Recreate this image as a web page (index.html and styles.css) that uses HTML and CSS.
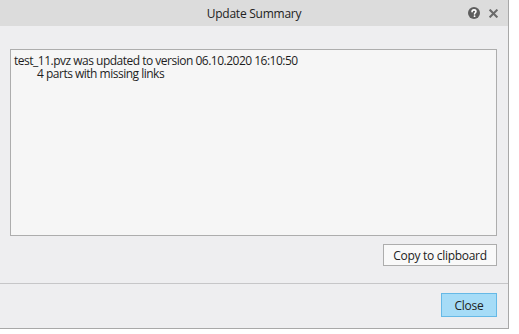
FILE: index.html
```html
<!DOCTYPE html>
<html>
<head>
<meta charset="utf-8">
<link rel="stylesheet" href="styles.css">
</head>
<body>
<div class="dialog">
  <div class="titlebar">
    <span class="title">Update Summary</span>
    <div class="tools">
      <svg class="help" width="12" height="12" viewBox="0 0 13 13">
        <circle cx="6.5" cy="6.5" r="6.5" fill="#5e5e5e"/>
        <path d="M4.4 5.1 C4.4 3.8 5.3 3.1 6.5 3.1 C7.8 3.1 8.6 3.8 8.6 4.9 C8.6 6.2 7.1 6.3 7.1 7.6" fill="none" stroke="#fff" stroke-width="1.7" stroke-linecap="round"/>
        <circle cx="7.1" cy="9.9" r="1" fill="#fff"/>
      </svg>
      <svg class="close-x" width="9" height="9" viewBox="0 0 9 9">
        <path d="M1.3 1.3 L7.7 7.7 M7.7 1.3 L1.3 7.7" stroke="#6a6a6a" stroke-width="2" stroke-linecap="square"/>
      </svg>
    </div>
  </div>
  <div class="body">
    <div class="textbox"><div class="log">test_11.pvz was updated to version 06.10.2020 16:10:50
	4 parts with missing links</div></div>
    <div class="copy-row">
      <button class="btn">Copy to clipboard</button>
    </div>
  </div>
  <div class="footer">
    <button class="btn primary">Close</button>
  </div>
</div>
</body>
</html>
```
FILE: styles.css
```css
html, body {
  margin: 0;
  padding: 0;
  background: #ffffff;
}
body {
  font-family: "Open Sans", "Noto Sans", "Liberation Sans", sans-serif;
  font-size: 12px;
  color: #1e1e1e;
}
.dialog {
  width: 508px;
  height: 328px;
  background: #eeeef0;
  border-right: 1px solid #a8a8a8;
  border-bottom: 1px solid #a8a8a8;
  display: flex;
  flex-direction: column;
}
.titlebar {
  height: 26px;
  background: #dcdcdc;
  display: flex;
  align-items: center;
  justify-content: center;
  position: relative;
  flex: none;
}
.title {
  font-size: 12px;
  letter-spacing: -0.25px;
  color: #222;
}
.tools {
  position: absolute;
  right: 10px;
  top: 7px;
  display: flex;
  align-items: center;
  gap: 9px;
}
.help { display: block; }
.close-x { display: block; }
.body {
  padding: 23px 11px 0 10px;
  flex: none;
}
.textbox {
  height: 185px;
  border: 1px solid #adadad;
  background: #f6f6f6;
  padding: 0 3px;
}
.log {
  margin-top: 4px;
  line-height: 13px;
  letter-spacing: -0.5px;
  white-space: pre;
  tab-size: 23px;
  -moz-tab-size: 23px;
}
.copy-row {
  display: flex;
  justify-content: flex-end;
  margin-top: 8px;
}
.btn {
  font-family: inherit;
  font-size: 12px;
  letter-spacing: -0.3px;
  color: #222;
  background: #f9f9f9;
  border: 1px solid #adadad;
  height: 22px;
  padding: 0 9px;
  margin: 0;
  cursor: default;
}
.copy-row .btn {
  width: 114px;
}
.footer {
  margin-top: 17px;
  border-top: 1px solid #c6c6c8;
  flex: 1;
  display: flex;
  justify-content: flex-end;
  align-items: flex-start;
  padding: 9px 11px 0 0;
}
.btn.primary {
  width: 56px;
  height: 24px;
  background: #a6dcf7;
  border-color: #66b9e6;
}
```
